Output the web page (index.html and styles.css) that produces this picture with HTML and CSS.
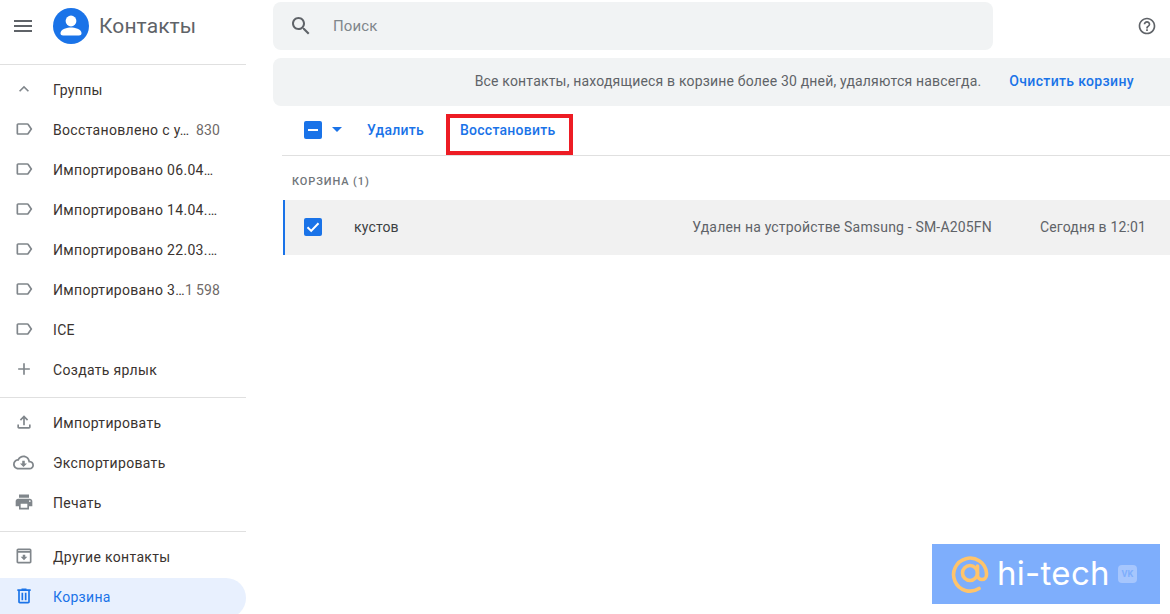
FILE: index.html
```html
<!DOCTYPE html>
<html lang="ru">
<head>
<meta charset="utf-8">
<title>Контакты</title>
<link rel="stylesheet" href="styles.css">
</head>
<body>
<div class="app">
  <aside class="sidebar">
    <header class="brand">
      <svg class="menu-icon" viewBox="0 0 24 24"><path d="M3 18h18v-2H3v2zm0-5h18v-2H3v2zm0-7v2h18V6H3z"/></svg>
      <svg class="logo" viewBox="0 0 36 36"><circle cx="18" cy="18" r="18" fill="#1a73e8"/><circle cx="18" cy="13" r="5.4" fill="#fff"/><path d="M7.5 25c0-3.6 7-5.4 10.500-5.400s10.500 1.800 10.500 5.400v.5c0 1-1 2-2.500 2h-16c-1.500 0-2.500-1-2.500-2z" fill="#fff"/></svg>
      <span class="brand-name">Контакты</span>
    </header>
    <nav class="nav-section">
      <div class="nav-row"><svg class="icon" viewBox="0 0 24 24"><path d="M12 8l-6 6 1.400 1.400L12 10.800l4.600 4.600L18 14z"/></svg><span class="label">Группы</span></div>
      <div class="nav-row"><svg class="icon" viewBox="0 0 24 24"><path d="M17.630 5.840C17.270 5.330 16.670 5 16 5L5 5.010C3.900 5.010 3 5.900 3 7v10c0 1.100.9 1.990 2 1.990L16 19c.67 0 1.270-.33 1.630-.84L22 12l-4.370-6.160zM16 17H5V7h11l3.550 5L16 17z"/></svg><span class="label">Восстановлено с у…</span><span class="count">830</span></div>
      <div class="nav-row"><svg class="icon" viewBox="0 0 24 24"><path d="M17.630 5.840C17.270 5.330 16.670 5 16 5L5 5.010C3.900 5.010 3 5.900 3 7v10c0 1.100.9 1.990 2 1.990L16 19c.67 0 1.270-.33 1.630-.84L22 12l-4.370-6.160zM16 17H5V7h11l3.550 5L16 17z"/></svg><span class="label">Импортировано 06.04…</span></div>
      <div class="nav-row"><svg class="icon" viewBox="0 0 24 24"><path d="M17.630 5.840C17.270 5.330 16.670 5 16 5L5 5.010C3.900 5.010 3 5.900 3 7v10c0 1.100.9 1.990 2 1.990L16 19c.67 0 1.270-.33 1.630-.84L22 12l-4.370-6.160zM16 17H5V7h11l3.550 5L16 17z"/></svg><span class="label">Импортировано 14.04.…</span></div>
      <div class="nav-row"><svg class="icon" viewBox="0 0 24 24"><path d="M17.630 5.840C17.270 5.330 16.670 5 16 5L5 5.010C3.900 5.010 3 5.900 3 7v10c0 1.100.9 1.990 2 1.990L16 19c.67 0 1.270-.33 1.630-.84L22 12l-4.370-6.160zM16 17H5V7h11l3.550 5L16 17z"/></svg><span class="label">Импортировано 22.03.…</span></div>
      <div class="nav-row"><svg class="icon" viewBox="0 0 24 24"><path d="M17.630 5.840C17.270 5.330 16.670 5 16 5L5 5.010C3.900 5.010 3 5.900 3 7v10c0 1.100.9 1.990 2 1.990L16 19c.67 0 1.270-.33 1.630-.84L22 12l-4.370-6.160zM16 17H5V7h11l3.550 5L16 17z"/></svg><span class="label">Импортировано 3…</span><span class="count">1 598</span></div>
      <div class="nav-row"><svg class="icon" viewBox="0 0 24 24"><path d="M17.630 5.840C17.270 5.330 16.670 5 16 5L5 5.010C3.900 5.010 3 5.900 3 7v10c0 1.100.9 1.990 2 1.990L16 19c.67 0 1.270-.33 1.630-.84L22 12l-4.370-6.160zM16 17H5V7h11l3.550 5L16 17z"/></svg><span class="label">ICE</span></div>
      <div class="nav-row"><svg class="icon" viewBox="0 0 24 24"><path d="M19 13h-6v6h-2v-6H5v-2h6V5h2v6h6z"/></svg><span class="label">Создать ярлык</span></div>
    </nav>
    <nav class="nav-section nav-tools">
      <div class="nav-row"><svg class="icon" viewBox="0 0 24 24"><path d="M18 15v3H6v-3H4v3c0 1.100.9 2 2 2h12c1.100 0 2-.9 2-2v-3h-2zM7 9l1.410 1.410L11 7.830V16h2V7.830l2.590 2.580L17 9l-5-5-5 5z"/></svg><span class="label">Импортировать</span></div>
      <div class="nav-row"><svg class="icon icon-wide" viewBox="0 0 24 24"><path d="M19.350 10.040C18.670 6.590 15.640 4 12 4 9.110 4 6.600 5.640 5.350 8.040 2.340 8.360 0 10.910 0 14c0 3.310 2.690 6 6 6h13c2.760 0 5-2.240 5-5 0-2.640-2.050-4.780-4.650-4.960zM19 18H6c-2.210 0-4-1.790-4-4 0-2.050 1.530-3.760 3.560-3.970l1.070-.11.500-.95C8.080 7.140 9.940 6 12 6c2.620 0 4.880 1.860 5.390 4.430l.3 1.500 1.530.11c1.560.1 2.780 1.410 2.780 2.960 0 1.650-1.350 3-3 3zm-5.550-8h-2.900v3H8l4 4 4-4h-2.550z"/></svg><span class="label">Экспортировать</span></div>
      <div class="nav-row"><svg class="icon" viewBox="0 0 24 24"><path d="M19 8H5c-1.660 0-3 1.340-3 3v6h4v4h12v-4h4v-6c0-1.660-1.340-3-3-3zm-3 11H8v-5h8v5zm3-7c-.55 0-1-.45-1-1s.45-1 1-1 1 .45 1 1-.45 1-1 1zm-1-9H6v4h12V3z"/></svg><span class="label">Печать</span></div>
    </nav>
    <nav class="nav-section nav-last">
      <div class="nav-row"><svg class="icon" viewBox="0 0 24 24"><path d="M19 3H5c-1.100 0-2 .9-2 2v14c0 1.100.9 2 2 2h14c1.100 0 2-.9 2-2V5c0-1.100-.9-2-2-2zm0 16H5V8h14v11zM5 6V5h14v1H5zm8.500 4.500h-3V13H8l4 4 4-4h-2.500z"/></svg><span class="label">Другие контакты</span></div>
      <div class="nav-row active"><svg class="icon" viewBox="0 0 24 24"><path d="M15 4V3H9v1H4v2h1v13c0 1.100.9 2 2 2h10c1.100 0 2-.9 2-2V6h1V4h-5zm2 15H7V6h10v13zM9 8h2v9H9zm4 0h2v9h-2z"/></svg><span class="label">Корзина</span></div>
    </nav>
  </aside>

  <main class="content">
    <div class="topbar">
      <div class="search">
        <svg class="search-icon" viewBox="0 0 24 24"><path d="M15.500 14h-.79l-.28-.27C15.410 12.590 16 11.110 16 9.500 16 5.910 13.090 3 9.500 3S3 5.910 3 9.500 5.910 16 9.500 16c1.610 0 3.090-.59 4.230-1.570l.27.28v.79l5 4.990L20.490 19l-4.990-5zm-6 0C7.010 14 5 11.990 5 9.500S7.010 5 9.500 5 14 7.010 14 9.500 11.990 14 9.500 14z"/></svg>
        <span class="search-text">Поиск</span>
      </div>
      <svg class="help-icon" viewBox="0 0 24 24"><path d="M11 18h2v-2h-2v2zm1-16C6.480 2 2 6.480 2 12s4.480 10 10 10 10-4.480 10-10S17.520 2 12 2zm0 18c-4.410 0-8-3.590-8-8s3.590-8 8-8 8 3.590 8 8-3.590 8-8 8zm0-14c-2.210 0-4 1.790-4 4h2c0-1.100.9-2 2-2s2 .9 2 2c0 2-3 1.750-3 5h2c0-2.250 3-2.500 3-5 0-2.210-1.790-4-4-4z"/></svg>
    </div>
    <div class="banner">
      <span class="banner-text">Все контакты, находящиеся в корзине более 30 дней, удаляются навсегда.</span>
      <span class="banner-link">Очистить корзину</span>
    </div>
    <div class="toolbar">
      <span class="check check-mixed"><span class="dash"></span></span>
      <span class="caret"></span>
      <span class="action action-delete">Удалить</span>
      <span class="action action-restore">Восстановить<span class="highlight"></span></span>
    </div>
    <div class="section-title">КОРЗИНА (1)</div>
    <div class="contact-row">
      <span class="check check-on"><svg viewBox="0 0 18 18"><path d="M3.500 9.200l3.700 3.700 7.300-7.700" fill="none" stroke="#fff" stroke-width="2"/></svg></span>
      <span class="contact-name">кустов</span>
      <span class="contact-note">Удален на устройстве Samsung - SM-A205FN</span>
      <span class="contact-date">Сегодня в 12:01</span>
    </div>
  </main>
</div>
<div class="watermark">
  <svg class="wm-at" viewBox="0 0 38 38"><g fill="none" stroke="#ffc46b" stroke-width="3.600" stroke-linecap="round"><circle cx="19" cy="18" r="7.500"/><path d="M28 33.500A16.500 16.500 0 1 1 35.500 18v2a4.500 4.500 0 0 1-9 0v-9"/></g></svg>
  <span class="wm-text">hi-tech</span>
  <span class="wm-vk">VK</span>
</div>
</body>
</html>
```
FILE: styles.css
```css
* { box-sizing: border-box; }
html, body { height: 100%; }
body {
  margin: 0;
  overflow: hidden;
  background: #fff;
  font-family: Roboto, "Liberation Sans", sans-serif;
  font-size: 14px;
  color: #3c4043;
}
.app { display: flex; height: 614px; overflow: hidden; }

.sidebar { flex: 0 0 246px; width: 246px; }
.brand {
  display: flex;
  align-items: center;
  height: 65px;
  padding: 0 0 12px 11px;
  border-bottom: 1px solid #e0e0e0;
}
.menu-icon { width: 24px; height: 24px; fill: #5f6368; margin-right: 18px; }
.logo { width: 36px; height: 36px; }
.brand-name { font-size: 21px; letter-spacing: .1px; color: #5f6368; margin-left: 10px; }

.nav-section { padding: 5px 0 7px; border-bottom: 1px solid #e0e0e0; }
.nav-tools { padding-bottom: 8px; }
.nav-last { border-bottom: 0; padding-top: 6px; }
.nav-last .nav-row { padding-bottom: 2px; }
.nav-row {
  display: flex;
  align-items: center;
  height: 40px;
  padding: 0 26px 0 14px;
  color: #3a3330;
  letter-spacing: .32px;
}
.icon { width: 20px; height: 20px; flex: none; fill: #80868b; margin: -2px 19px 0 0; }
.icon-wide { width: 21px; height: 21px; margin-left: -1px; }
.label { white-space: nowrap; }
.count { color: #6f6a68; margin-left: auto; letter-spacing: .1px; word-spacing: -.5px; }
.active {
  background: #e8f0fe;
  border-radius: 0 20px 20px 0;
  color: #1a73e8;
}
.active .icon { fill: #1a73e8; }

.content { flex: 1; min-width: 0; padding-top: 2px; }
.topbar { display: flex; align-items: center; padding-left: 27px; }
.search {
  display: flex;
  align-items: center;
  width: 720px;
  height: 48px;
  background: #f1f3f4;
  border-radius: 8px;
  padding-left: 16px;
}
.search-icon { width: 24px; height: 24px; fill: #5f6368; margin-right: 20px; }
.search-text { font-size: 15px; color: #80868b; letter-spacing: .1px; }
.help-icon { width: 20px; height: 20px; fill: #5f6368; margin-left: 144px; }

.banner {
  display: flex;
  align-items: center;
  justify-content: flex-end;
  height: 48px;
  margin: 8px 0 0 27px;
  padding: 0 36px 2px 0;
  background: #f1f3f4;
  border-radius: 8px 0 0 8px;
}
.banner-text { font-size: 14px; color: #5f6368; letter-spacing: .18px; }
.banner-link { margin-left: 28px; color: #1a73e8; font-size: 14px; font-weight: 500; letter-spacing: .35px; }

.toolbar {
  display: flex;
  align-items: center;
  height: 50px;
  margin-left: 36px;
  padding: 0 0 2px 22px;
  border-bottom: 1px solid #e0e0e0;
}
.check {
  display: flex;
  align-items: center;
  justify-content: center;
  width: 18px;
  height: 18px;
  background: #1a73e8;
  border-radius: 2px;
}
.dash { width: 10px; height: 2px; background: #fff; }
.caret {
  width: 0;
  height: 0;
  margin-left: 10px;
  border: 5px solid transparent;
  border-top-color: #1a73e8;
  border-bottom: 0;
}
.action { position: relative; color: #1a73e8; font-weight: 500; letter-spacing: .26px; }
.action-delete { margin-left: 25px; }
.action-restore { margin-left: 36px; }
.highlight {
  position: absolute;
  left: -14px;
  top: -8px;
  width: 127px;
  height: 41px;
  border: 4px solid #ed1c24;
}

.section-title {
  height: 44px;
  margin-left: 46px;
  padding-top: 19px;
  font-size: 11px;
  font-weight: 500;
  letter-spacing: .9px;
  color: #70757a;
}
.contact-row {
  display: flex;
  align-items: center;
  height: 55px;
  margin-left: 37px;
  padding: 0 24px 1px 19px;
  background: #f1f1f1;
  border-left: 2px solid #1a73e8;
}
.contact-name { margin-left: 32px; color: #3c4043; letter-spacing: .15px; }
.contact-note { margin-left: auto; color: #5f6368; letter-spacing: .18px; }
.contact-date { margin-left: 48px; color: #5f6368; letter-spacing: .15px; }

.watermark {
  position: absolute;
  left: 932px;
  top: 544px;
  width: 228px;
  height: 60px;
  display: flex;
  align-items: center;
  padding-left: 19px;
  background: #7eaefc;
}
.wm-at { width: 38px; height: 38px; flex: none; }
.wm-text { margin-left: 8px; font-size: 33px; line-height: 1; color: #fff; font-family: Inter, sans-serif; letter-spacing: .3px; margin-top: -2px; }
.wm-vk {
  margin-left: 8px;
  width: 19px;
  height: 18px;
  border-radius: 4px;
  background: #a6c6fd;
  color: #7eaefc;
  font-size: 9px;
  font-weight: 700;
  line-height: 18px;
  text-align: center;
}
```
